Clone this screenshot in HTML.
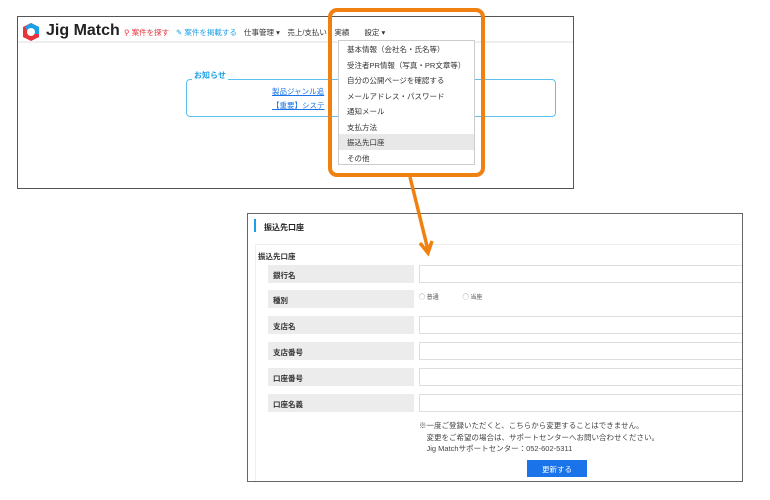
<!DOCTYPE html><html><head><meta charset="utf-8"><style>
*{margin:0;padding:0;box-sizing:border-box}
body{width:770px;height:500px;background:#fff;position:relative;font-family:"Liberation Sans","Noto Sans CJK JP",sans-serif;overflow:hidden}
.a{position:absolute}
.s{font-size:7.5px;color:#333}
.lb{position:absolute;left:268px;width:146px;height:18px;background:#ececec;font-size:7.5px;font-weight:bold;color:#333;padding:5px 0 0 5px}
.in{position:absolute;left:419px;width:323px;height:18px;border:1px solid #ddd;border-right:none;background:#fff}
.dd div{height:15.5px;padding:3px 0 0 8px;font-size:7.5px;color:#333}
</style></head><body>
<div class="a" style="left:17px;top:16px;width:557px;height:173px;border:1px solid #555;background:#fff"></div>
<div class="a" style="left:18px;top:17px;width:555px;height:26px;border-bottom:2px solid #eee"></div>
<svg class="a" style="left:21px;top:22px" width="20" height="20" viewBox="0 0 20 20"><polygon points="10,1 18,5 18,15 10,19 2,15 2,5" fill="#e8333a"/><polygon points="10,1 18,5 18,12 8,12 4,5" fill="#1aa0e8"/><circle cx="10" cy="10" r="4" fill="#fff"/></svg>
<div class="a" style="left:46px;top:22px;font-size:16px;font-weight:bold;color:#222">Jig Match</div>
<div class="a s" style="left:124px;top:27px;color:#e8333a">⚲ 案件を探す</div>
<div class="a s" style="left:176px;top:27px;color:#1aa0e8">✎ 案件を掲載する</div>
<div class="a s" style="left:244px;top:27px">仕事管理 ▾　売上/支払い　実績　　設定 ▾</div>
<div class="a" style="left:186px;top:79px;width:370px;height:38px;border:1px solid #5cc0f0;border-radius:4px"></div>
<div class="a" style="left:192px;top:70px;font-size:8px;font-weight:bold;color:#1aa0e8;background:#fff;padding:0 2px">お知らせ</div>
<div class="a s" style="left:272px;top:86px;color:#1a73e8;text-decoration:underline">製品ジャンル追</div>
<div class="a s" style="left:272px;top:100px;color:#1a73e8;text-decoration:underline">【重要】システ</div>
<div class="a dd" style="left:338px;top:40px;width:137px;height:125px;border:1px solid #ccc;background:#fff">
<div>基本情報（会社名・氏名等）</div><div>受注者PR情報（写真・PR文章等）</div><div>自分の公開ページを確認する</div><div>メールアドレス・パスワード</div><div>通知メール</div><div>支払方法</div><div style="background:#e8e8e8">振込先口座</div><div>その他</div></div>
<div class="a" style="left:328px;top:8px;width:157px;height:169px;border:4px solid #f08010;border-radius:9px"></div>
<div class="a" style="left:247px;top:213px;width:496px;height:269px;border:1px solid #666;background:#fff"></div>
<div class="a" style="left:254px;top:219px;width:2px;height:13px;background:#1aa0e8"></div>
<div class="a" style="left:264px;top:222px;font-size:8px;font-weight:bold;color:#222">振込先口座</div>
<div class="a" style="left:255px;top:244px;width:487px;height:237px;border-top:1px solid #eee;border-left:1px solid #eee"></div>
<div class="a" style="left:258px;top:251px;font-size:7.5px;font-weight:bold;color:#333">振込先口座</div>
<div class="lb" style="top:265px">銀行名</div><div class="in" style="top:265px"></div>
<div class="lb" style="top:290px">種別</div>
<div class="a" style="left:419px;top:292px;font-size:6px;color:#555">◯ 普通　　　　◯ 当座</div>
<div class="lb" style="top:316px">支店名</div><div class="in" style="top:316px"></div>
<div class="lb" style="top:342px">支店番号</div><div class="in" style="top:342px"></div>
<div class="lb" style="top:368px">口座番号</div><div class="in" style="top:368px"></div>
<div class="lb" style="top:394px">口座名義</div><div class="in" style="top:394px"></div>
<div class="a" style="left:419px;top:420px;font-size:7.5px;line-height:11.5px;color:#444">※一度ご登録いただくと、こちらから変更することはできません。<br>　変更をご希望の場合は、サポートセンターへお問い合わせください。<br>　Jig Matchサポートセンター：052-602-5311</div>
<div class="a" style="left:527px;top:460px;width:60px;height:17px;background:#1a73e8;color:#fff;font-size:7.5px;text-align:center;padding-top:4px">更新する</div>
<svg class="a" style="left:0;top:0" width="770" height="500"><path d="M410 177 L428 250" stroke="#f08010" stroke-width="3.5" fill="none"/><path d="M420 243 L428 253 L432 241" stroke="#f08010" stroke-width="3.5" fill="none"/></svg>
</body></html>
